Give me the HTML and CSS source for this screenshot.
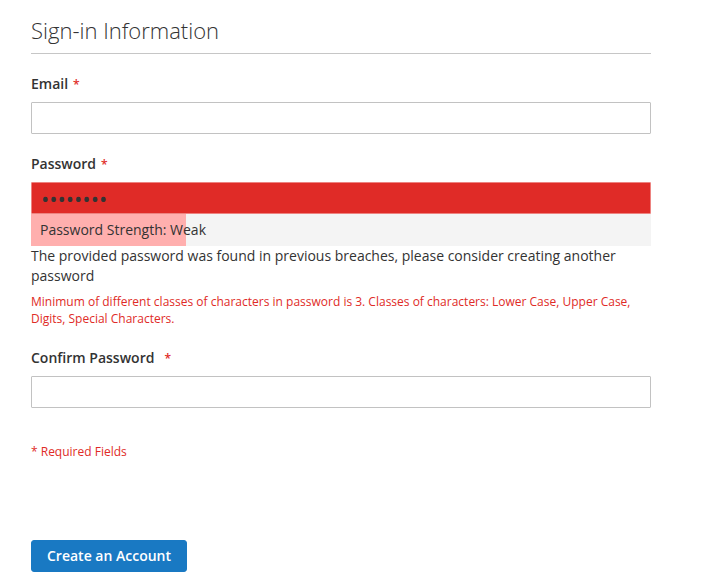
FILE: index.html
```html
<!DOCTYPE html>
<html lang="en">
<head>
<meta charset="utf-8">
<title>Sign-in Information</title>
<link rel="stylesheet" href="styles.css">
</head>
<body>
<form class="form" onsubmit="return false">
  <div class="legend">Sign-in Information</div>

  <div class="field">
    <label class="label" for="email">Email<span class="req">*</span></label>
    <input class="input" id="email" type="email">
  </div>

  <div class="field">
    <label class="label" for="password">Password<span class="req">*</span></label>
    <input class="input input-error" id="password" type="password" value="abcdefgh">
    <div class="meter">Password Strength: Weak</div>
    <div class="note">The provided password was found in previous breaches, please consider creating another password</div>
    <div class="error">Minimum of different classes of characters in password is 3. Classes of characters: Lower Case, Upper Case, Digits, Special Characters.</div>
  </div>

  <div class="field">
    <label class="label" for="confirm">Confirm Password<span class="req req-wide">*</span></label>
    <input class="input" id="confirm" type="password">
  </div>

  <div class="required">* Required Fields</div>

  <div class="actions">
    <button class="btn" type="submit">Create an Account</button>
  </div>
</form>
</body>
</html>
```

FILE: styles.css
```css
html, body {
  margin: 0;
  padding: 0;
  background: #fff;
}

body {
  font-family: "Open Sans", "Liberation Sans", sans-serif;
  font-size: 14px;
  line-height: 20px;
  color: #333;
}

.form {
  width: 620px;
  margin-left: 31px;
  padding-top: 17px;
}

.legend {
  font-size: 22px;
  font-weight: 300;
  line-height: 26px;
  padding-bottom: 10px;
  border-bottom: 1px solid #c6c6c6;
  margin-bottom: 20px;
  color: #333;
}

.field {
  margin-bottom: 20px;
}

.label {
  display: block;
  height: 20px;
  font-weight: 600;
  font-size: 14px;
  line-height: 20px;
  margin-bottom: 8px;
}

.req {
  color: #e02b27;
  font-size: 12px;
  line-height: 12px;
  margin-left: 5px;
}

.req-wide {
  margin-left: 10px;
}

.input {
  display: block;
  box-sizing: border-box;
  width: 100%;
  height: 32px;
  margin: 0;
  padding: 0 9px;
  border: 1px solid #c2c2c2;
  border-radius: 1px;
  background: #fff;
  font: inherit;
  color: #333;
  outline: none;
}

.input-error {
  background: #e02b27;
  border-color: #ed8380;
  font-size: 22px;
  padding-left: 9px;
  color: #333;
}

.meter {
  height: 32px;
  line-height: 32px;
  padding: 0 9px;
  background: linear-gradient(to right, #ffafae 25%, #f4f4f4 25%);
  color: #333;
}

.note {
  font-size: 14px;
  line-height: 20px;
}

.error {
  margin-top: 7px;
  padding-bottom: 1px;
  font-size: 12px;
  line-height: 17px;
  color: #e02b27;
}

.required {
  margin-top: 35px;
  font-size: 12px;
  line-height: 17px;
  color: #e02b27;
}

.actions {
  margin-top: 80px;
}

.btn {
  display: inline-block;
  box-sizing: border-box;
  height: 32px;
  padding: 0 15px;
  border: 1px solid #1979c3;
  border-radius: 3px;
  background: #1979c3;
  color: #fff;
  font-family: "Open Sans", "Liberation Sans", sans-serif;
  font-size: 14px;
  font-weight: 600;
  line-height: 30px;
  cursor: pointer;
}
```
